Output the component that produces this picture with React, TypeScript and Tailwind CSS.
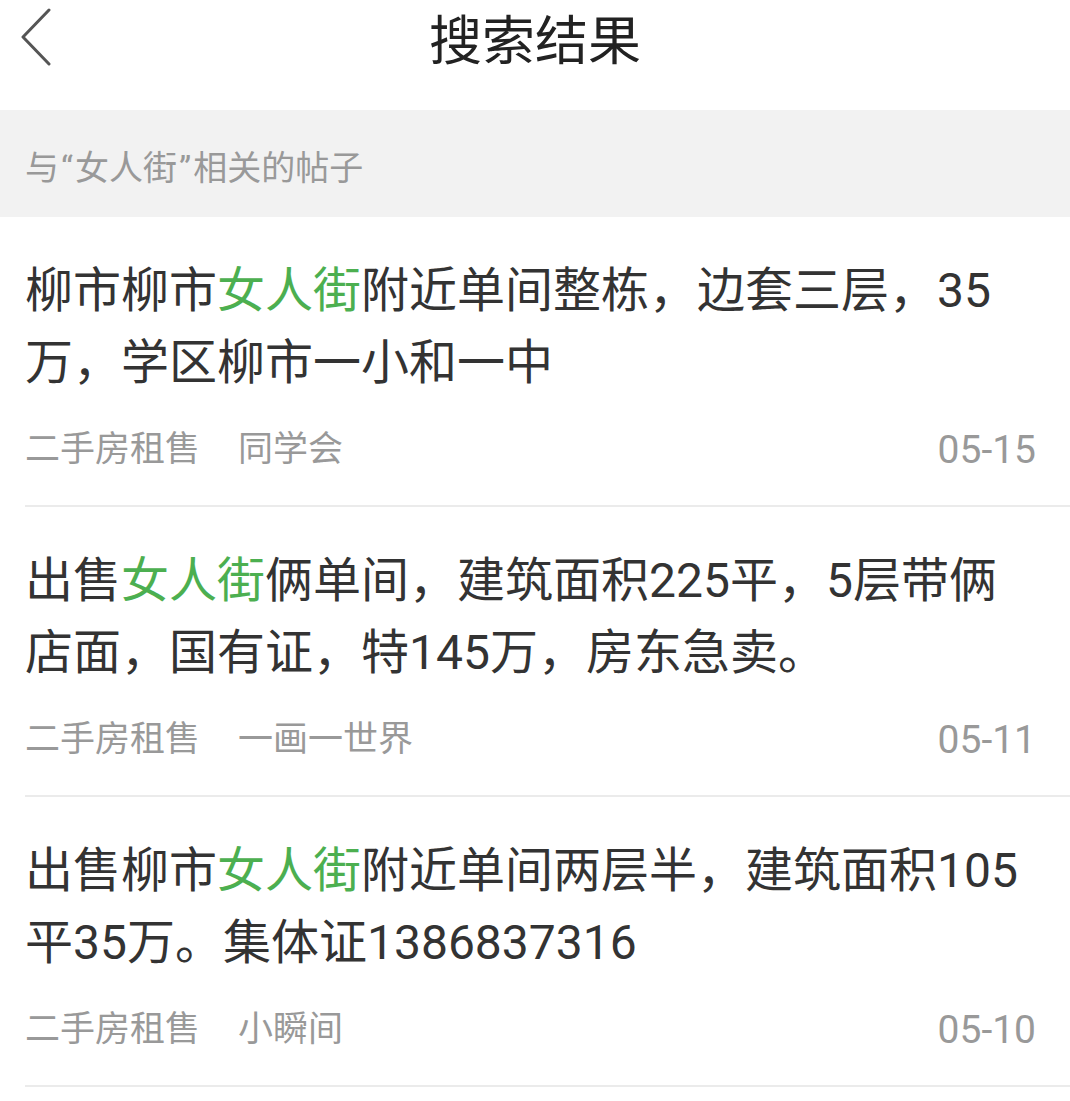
const FONT = {
  fontFamily: 'Roboto, "Noto Sans CJK SC", "Noto Sans", sans-serif',
};

type Post = {
  before: string;
  hit: string;
  after: string;
  board: string;
  group: string;
  date: string;
};

const posts: Post[] = [
  {
    before: "柳市柳市",
    hit: "女人街",
    after: "附近单间整栋，边套三层，35万，学区柳市一小和一中",
    board: "二手房租售",
    group: "同学会",
    date: "05-15",
  },
  {
    before: "出售",
    hit: "女人街",
    after: "俩单间，建筑面积225平，5层带俩店面，国有证，特145万，房东急卖。",
    board: "二手房租售",
    group: "一画一世界",
    date: "05-11",
  },
  {
    before: "出售柳市",
    hit: "女人街",
    after: "附近单间两层半，建筑面积105平35万。集体证1386837316",
    board: "二手房租售",
    group: "小瞬间",
    date: "05-10",
  },
];

function BackIcon() {
  return (
    <svg width="32" height="58" viewBox="0 0 32 58" fill="none">
      <path
        d="M29 2 L3 29 L29 56"
        stroke="#555"
        strokeWidth="3"
        strokeLinecap="round"
        strokeLinejoin="round"
      />
    </svg>
  );
}

function PostRow({ post }: { post: Post }) {
  return (
    <div className="ml-[25px] border-b-2 border-[#ebebeb] pt-[38px] pb-[30px] pr-[34px]">
      <div className="text-[48px] leading-[72px] text-[#333]">
        {post.before}
        <span className="text-[#4caf50]">{post.hit}</span>
        {post.after}
      </div>
      <div className="mt-[26px] flex items-center text-[35px] leading-[50px] text-[#999]">
        <span>{post.board}</span>
        <span className="ml-[38px]">{post.group}</span>
        <span className="ml-auto text-[39px]">{post.date}</span>
      </div>
    </div>
  );
}

export default function App() {
  return (
    <div className="min-h-screen w-[1070px] bg-white" style={FONT}>
      {/* header */}
      <div className="relative flex h-[110px] items-start justify-center">
        <div className="absolute left-[20px] top-[8px]">
          <BackIcon />
        </div>
        <h1 className="mt-[9px] text-[53px] leading-[66px] text-[#222]">
          搜索结果
        </h1>
      </div>

      {/* section label */}
      <div className="flex h-[107px] items-center bg-[#f2f2f2] px-[25px] pt-[10px]">
        <span className="text-[34px] text-[#999]">
          与<span className="mx-[2px]">“</span>女人街<span className="mx-[2px]">”</span>相关的帖子
        </span>
      </div>

      {posts.map((p) => (
        <PostRow key={p.date} post={p} />
      ))}
    </div>
  );
}
